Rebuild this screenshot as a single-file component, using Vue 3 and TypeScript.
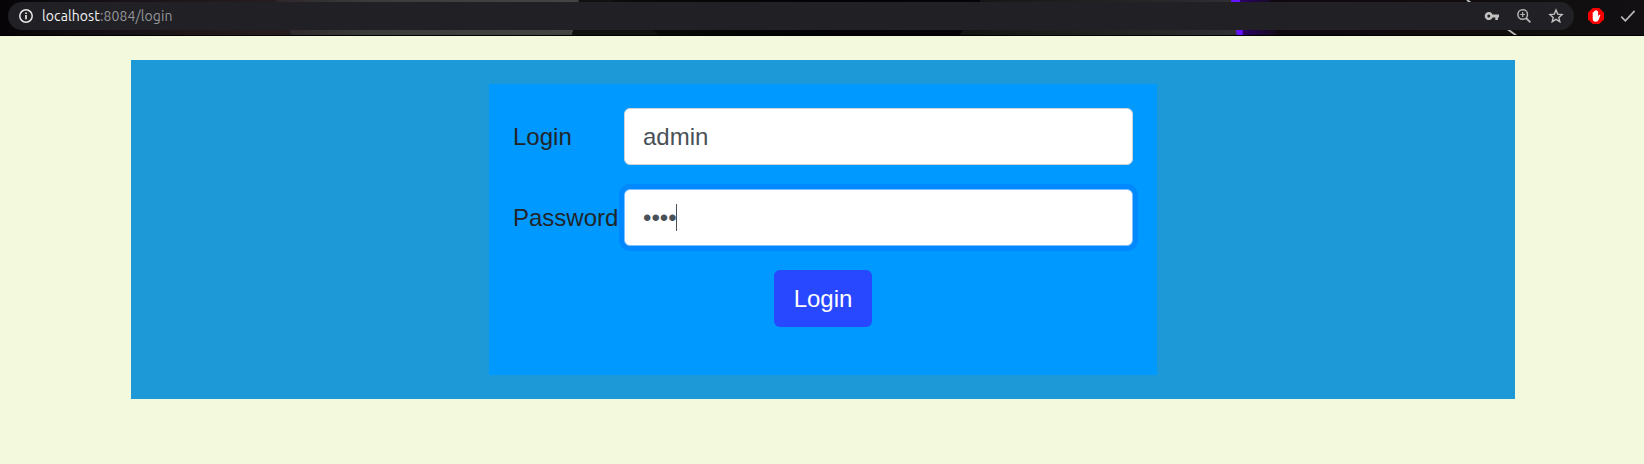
<script setup lang="ts">
import { ref } from 'vue'

const login = ref('admin')
const mask = ref('••••')
</script>

<template>
  <div class="page">
    <header class="toolbar">
      <svg class="theme" width="1644" height="36" viewBox="0 0 1644 36" aria-hidden="true">
        <defs>
          <linearGradient id="base" gradientUnits="userSpaceOnUse" x1="0" x2="1644" y1="0" y2="0">
            <stop offset="0" stop-color="#060406" />
            <stop offset="0.08" stop-color="#181316" />
            <stop offset="0.16" stop-color="#251d20" />
            <stop offset="0.34" stop-color="#151515" />
            <stop offset="0.39" stop-color="#090909" />
            <stop offset="0.5" stop-color="#030204" />
            <stop offset="0.62" stop-color="#08040a" />
            <stop offset="0.75" stop-color="#0d0810" />
            <stop offset="0.85" stop-color="#100b0d" />
            <stop offset="1" stop-color="#121012" />
          </linearGradient>
          <linearGradient id="gray" x1="0" x2="1">
            <stop offset="0" stop-color="#2d272a" />
            <stop offset="0.3" stop-color="#3b3b3b" />
            <stop offset="1" stop-color="#444" />
          </linearGradient>
          <linearGradient id="dark" x1="0" x2="1">
            <stop offset="0" stop-color="#141414" />
            <stop offset="0.6" stop-color="#242424" />
            <stop offset="1" stop-color="#303033" />
          </linearGradient>
          <linearGradient id="violet" x1="0" x2="1">
            <stop offset="0" stop-color="#300078" />
            <stop offset="1" stop-color="#120b14" />
          </linearGradient>
        </defs>
        <rect width="1644" height="36" fill="url(#base)" />
        <path d="M276 0H579L572 36H292Z" fill="url(#gray)" />
        <path d="M579 0H612L660 36H572Z" fill="#111" />
        <path d="M981 0H1232L1238 36H959Z" fill="url(#dark)" />
        <path d="M1234 0H1270L1278 36H1240Z" fill="url(#violet)" />
        <path d="M1231 0H1240L1243 36H1237Z" fill="#6412ff" />
        <path d="M1467 0L1517 36" stroke="#bbb" stroke-width="1.8" />
        <rect y="35" width="1644" height="1" fill="#000" />
      </svg>
      <div class="omnibox">
        <svg class="info" width="16" height="16" viewBox="0 0 16 16">
          <circle cx="8" cy="8" r="6.2" fill="none" stroke="#e8e8e8" stroke-width="1.5" />
          <path d="M8 7.1V11.2M8 4.4V6" stroke="#e8e8e8" stroke-width="1.7" />
        </svg>
        <span class="url"><span class="host">localhost</span>:8084/login</span>
        <div class="actions">
          <svg width="16" height="16" viewBox="0 0 16 16">
            <path
              fill="#c0c0c0"
              fill-rule="evenodd"
              d="M8.6 6.5H15V9.5H13.9V12H11.3V9.5H8.6A4.1 4.1 0 1 1 8.6 6.5ZM4.8 6.5A1.5 1.5 0 1 0 4.8 9.5A1.5 1.5 0 0 0 4.8 6.5Z"
            />
          </svg>
          <svg width="16" height="16" viewBox="0 0 16 16" fill="none" stroke="#b4b4b4">
            <circle cx="6.7" cy="6.5" r="4.8" stroke-width="1.5" />
            <path d="M10 10L14.4 14.4" stroke-width="1.8" />
            <path d="M4.3 6.5H9.1M6.7 4.1V8.9" stroke-width="1.2" />
          </svg>
          <svg width="16" height="16" viewBox="0 0 16 16">
            <path
              d="M8 2L9.7 6.1L14.1 6.5L10.8 9.4L11.8 13.7L8 11.4L4.2 13.7L5.2 9.4L1.9 6.5L6.3 6.1Z"
              fill="none"
              stroke="#c0c0c0"
              stroke-width="1.4"
            />
          </svg>
        </div>
      </div>
      <svg class="blocker" width="16" height="16" viewBox="0 0 16 16">
        <path d="M4.7 0H11.3L16 4.7V11.3L11.3 16H4.7L0 11.3V4.7Z" fill="#f60000" />
        <path
          d="M4.7 8.4V4.8Q4.7 4.1 5.35 4.1T6 4.8V3.4Q6 2.7 6.7 2.7T7.4 3.4V2.7Q7.4 2 8.1 2T8.8 2.7V3.5Q8.8 2.9 9.45 2.9T10.1 3.5V8.4L11 7.1Q11.7 6.5 12.4 7L10.8 11.4Q10 13.7 7.8 13.7Q4.7 13.7 4.7 10.7Z"
          fill="#fff"
        />
      </svg>
      <svg class="check" width="16" height="14" viewBox="0 0 16 14">
        <path d="M1.2 7.6L5.4 11.8L14.6 1.8" fill="none" stroke="#b8b8b8" stroke-width="1.7" />
      </svg>
    </header>

    <main class="container">
      <form class="card" @submit.prevent>
        <div class="row">
          <label class="label">Login</label>
          <div class="control">{{ login }}</div>
        </div>
        <div class="row">
          <label class="label">Password</label>
          <div class="control focused">{{ mask }}<span class="caret"></span></div>
        </div>
        <button class="submit" type="submit">Login</button>
      </form>
    </main>
  </div>
</template>

<style>
body {
  background: #f3f9dc;
}
</style>

<style scoped>
.page {
  height: 464px;
  overflow: hidden;
  background: #f3f9dc;
  font-family: "Liberation Sans", Arial, sans-serif;
}
.toolbar {
  position: relative;
  display: flex;
  align-items: flex-start;
  box-sizing: border-box;
  height: 36px;
  padding: 2px 0 0 8px;
}
.toolbar svg {
  display: block;
  flex: none;
}
.theme {
  position: absolute;
  top: 0;
  left: 0;
}
.omnibox {
  position: relative;
  display: flex;
  align-items: center;
  box-sizing: border-box;
  width: 1566px;
  height: 28px;
  padding: 0 10px;
  border-radius: 14px;
  background: #212125;
}
.url {
  margin-left: 8px;
  color: #96969a;
  font: 14px/28px Ubuntu, "Noto Sans", sans-serif;
  letter-spacing: 0.1px;
  white-space: nowrap;
}
.host {
  color: #f4f4f4;
}
.actions {
  display: flex;
  gap: 16px;
  margin-left: auto;
}
.blocker {
  position: relative;
  margin: 6px 0 0 14px;
}
.check {
  position: relative;
  margin: 7px 0 0 16px;
}
.container {
  box-sizing: border-box;
  width: 1384px;
  height: 339px;
  margin: 24px 0 0 131px;
  padding: 24px 0 0 358px;
  background: #1e99d8;
}
.card {
  display: flex;
  flex-direction: column;
  gap: 24px;
  box-sizing: border-box;
  width: 668px;
  height: 291px;
  padding: 24px;
  background: #0099ff;
}
.row {
  display: flex;
  height: 57px;
}
.label {
  width: 111px;
  color: #212529;
  font-size: 24px;
  line-height: 57px;
}
.control {
  display: flex;
  align-items: center;
  flex: 1;
  box-sizing: border-box;
  padding: 0 18px;
  border: 1px solid #ced4da;
  border-radius: 6px;
  background: #fff;
  color: #495057;
  font-size: 24px;
}
.focused {
  border-color: #80bdff;
  box-shadow: 0 0 0 5px #0088ff;
}
.caret {
  width: 1px;
  height: 27px;
  margin-left: -1px;
  background: #495057;
}
.submit {
  align-self: center;
  width: 98px;
  height: 57px;
  padding: 0;
  border: 0;
  border-radius: 6px;
  background: #2848ff;
  color: #fff;
  font: 24px/57px "Liberation Sans", Arial, sans-serif;
}
</style>
